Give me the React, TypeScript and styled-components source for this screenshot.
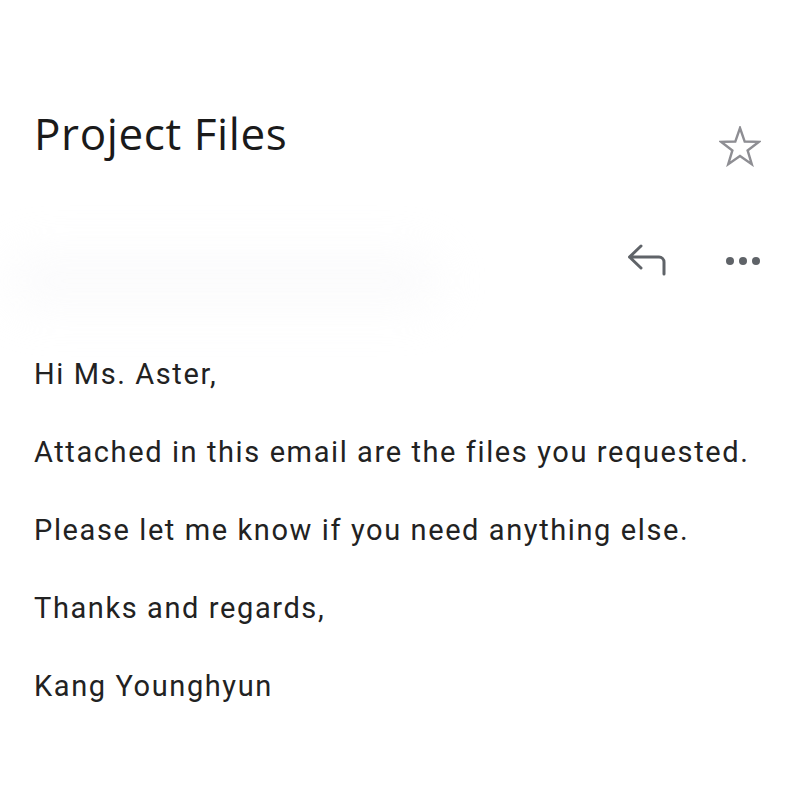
import styled, { createGlobalStyle } from "styled-components";

const GlobalStyle = createGlobalStyle`
  html, body {
    margin: 0;
    padding: 0;
    background: #ffffff;
  }
  body {
    font-family: Roboto, "Liberation Sans", sans-serif;
    color: #202124;
  }
`;

const lines = [
  "Hi Ms. Aster,",
  "Attached in this email are the files you requested.",
  "Please let me know if you need anything else.",
  "Thanks and regards,",
  "Kang Younghyun",
];

const App = () => {
  return (
    <>
      <GlobalStyle />
      <Page>
        <Header>
          <Title>Project Files</Title>
          <Star aria-label="star">
            <svg width="42" height="41" viewBox="0 0 42 41" fill="none">
              <path
                d="M21 2L25.7 15.53 40.02 15.82 28.61 24.47 32.76 38.18 21 30 9.24 38.18 13.39 24.47 1.98 15.82 16.3 15.53Z"
                stroke="#8e8e93"
                strokeWidth="2.4"
                strokeLinejoin="miter"
              />
            </svg>
          </Star>
        </Header>

        <SenderRow>
          <Blurred />
          <Actions>
            <IconButton aria-label="reply">
              <svg width="48" height="40" viewBox="0 0 48 40" fill="none">
                <path
                  d="M16 5L4.5 16 16 27M4.5 16H34a5 5 0 0 1 5 5v12"
                  stroke="#5f6368"
                  strokeWidth="3"
                  strokeLinecap="round"
                  strokeLinejoin="round"
                />
              </svg>
            </IconButton>
            <IconButton aria-label="more">
              <svg width="40" height="20" viewBox="0 0 40 20">
                <circle cx="7" cy="10" r="4" fill="#5f6368" />
                <circle cx="20" cy="10" r="4" fill="#5f6368" />
                <circle cx="33" cy="10" r="4" fill="#5f6368" />
              </svg>
            </IconButton>
          </Actions>
        </SenderRow>

        <Body>
          {lines.map((line) => (
            <Line key={line}>{line}</Line>
          ))}
        </Body>
      </Page>
    </>
  );
};

const Page = styled.div`
  width: 800px;
  height: 800px;
  box-sizing: border-box;
  padding: 105px 39px 0 34px;
  overflow: hidden;
`;

const Header = styled.div`
  display: flex;
  align-items: flex-start;
  justify-content: space-between;
`;

const Title = styled.h1`
  margin: 0;
  font-family: "Open Sans", Roboto, sans-serif;
  font-weight: 400;
  font-size: 44px;
  line-height: 56px;
  letter-spacing: 0.6px;
  color: #1a1a1a;
`;

const IconButton = styled.div`
  display: flex;
  align-items: center;
  justify-content: center;
`;

const Star = styled(IconButton)`
  margin-top: 21px;
`;

const SenderRow = styled.div`
  display: flex;
  align-items: center;
  justify-content: space-between;
  height: 110px;
  margin-top: 39px;
`;

const Blurred = styled.div`
  width: 440px;
  height: 60px;
  margin-left: -30px;
  margin-top: 40px;
  border-radius: 40px;
  background: #f4f4f7;
  filter: blur(22px);
  opacity: 0.35;
`;

const Actions = styled.div`
  display: flex;
  align-items: center;
  gap: 50px;
  margin-right: -2px;
`;

const Body = styled.div`
  display: flex;
  flex-direction: column;
  gap: 46px;
  margin-top: 42px;
`;

const Line = styled.p`
  margin: 0;
  font-size: 29px;
  line-height: 32px;
  letter-spacing: 1.6px;
  color: #222222;
`;

export default App;
